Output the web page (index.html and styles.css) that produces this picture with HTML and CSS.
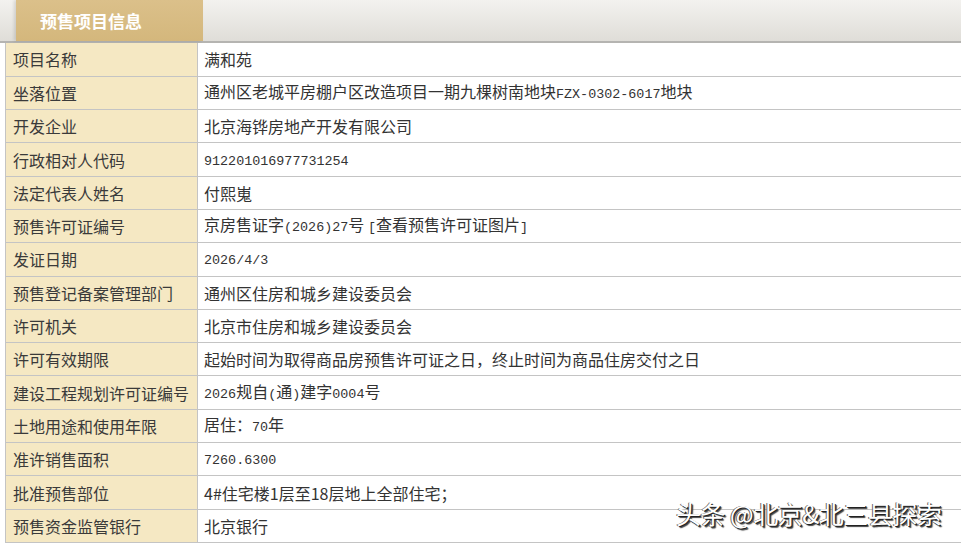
FILE: index.html
```html
<!DOCTYPE html>
<html lang="zh-CN">
<head>
    <meta charset="UTF-8">
    <title>预售项目信息</title>
    <link rel="stylesheet" href="styles.css">
</head>
<body>
    <div class="title-bar">
        <div class="title-tab">预售项目信息</div>
    </div>

    <table class="info">
        <tr><th>项目名称</th><td>满和苑</td></tr>
        <tr><th>坐落位置</th><td>通州区老城平房棚户区改造项目一期九棵树南地块<span class="num">FZX-0302-6017</span>地块</td></tr>
        <tr><th>开发企业</th><td>北京海铧房地产开发有限公司</td></tr>
        <tr><th>行政相对人代码</th><td><span class="num">912201016977731254</span></td></tr>
        <tr><th>法定代表人姓名</th><td>付熙嵬</td></tr>
        <tr><th>预售许可证编号</th><td>京房售证字<span class="num">(2026)27</span>号 <span class="num">[</span>查看预售许可证图片<span class="num">]</span></td></tr>
        <tr><th>发证日期</th><td><span class="num">2026/4/3</span></td></tr>
        <tr><th>预售登记备案管理部门</th><td>通州区住房和城乡建设委员会</td></tr>
        <tr><th>许可机关</th><td>北京市住房和城乡建设委员会</td></tr>
        <tr><th>许可有效期限</th><td>起始时间为取得商品房预售许可证之日，终止时间为商品住房交付之日</td></tr>
        <tr><th>建设工程规划许可证编号</th><td><span class="num">2026</span>规自<span class="num">(</span>通<span class="num">)</span>建字<span class="num">0004</span>号</td></tr>
        <tr><th>土地用途和使用年限</th><td>居住：<span class="num">70</span>年</td></tr>
        <tr><th>准许销售面积</th><td><span class="num">7260.6300</span></td></tr>
        <tr><th>批准预售部位</th><td>4#住宅楼1层至18层地上全部住宅；</td></tr>
        <tr><th>预售资金监管银行</th><td>北京银行</td></tr>
    </table>

    <div class="watermark">头条 @北京&amp;北三县探索</div>
</body>
</html>
```

FILE: styles.css
```css
body {
    margin: 0;
    padding: 0;
    background: #fff;
    color: #333;
    font-family: "Noto Sans CJK SC", sans-serif;
    overflow: hidden;
}

.title-bar {
    height: 41px;
    background: linear-gradient(#f3f2ef, #dfddd8);
    border-bottom: 2px solid #b5b4b1;
    padding-left: 16px;
}

.title-tab {
    width: 187px;
    height: 41px;
    background: linear-gradient(#dbc08a, #d4b77c);
    box-shadow: -2px 0 3px rgba(0, 0, 0, 0.12);
    color: #fff;
    font-size: 17px;
    font-weight: bold;
    line-height: 41px;
    padding-left: 24px;
    box-sizing: border-box;
}

.info {
    border-collapse: collapse;
    margin-left: 5px;
    width: 100%;
    font-size: 16px;
}

.info tr {
    height: 33.3px;
}

.info th,
.info td {
    border: 1px solid #c4c4c4;
    border-top: none;
    padding: 0 6px;
    text-align: left;
    white-space: nowrap;
    line-height: 20px;
}

.info th {
    width: 178px;
    background: #f5e8c3;
    font-weight: normal;
    padding-left: 7px;
    color: #3a3a3a;
}

.info td {
    background: #fff;
    color: #333;
}

.num {
    font-family: "Liberation Mono", monospace;
    font-size: 13.4px;
}

.watermark {
    position: absolute;
    left: 676px;
    top: 495px;
    font-size: 25px;
    color: #fff;
    text-shadow: 1px 1px 0 #222, 2px 2px 1px #444, -1px 0 0 #666;
    letter-spacing: -0.5px;
}
```
